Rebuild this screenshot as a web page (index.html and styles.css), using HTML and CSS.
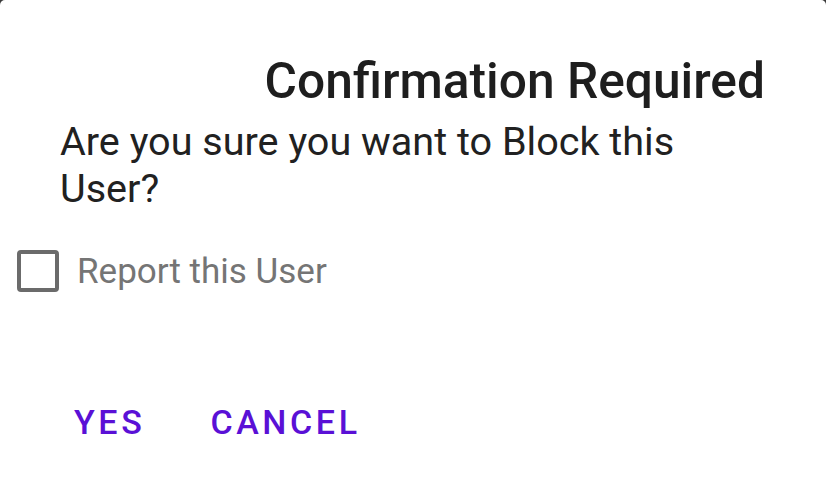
FILE: index.html
```html
<!DOCTYPE html>
<html>
<head>
<meta charset="utf-8">
<link rel="stylesheet" href="styles.css">
</head>
<body>
<div class="dialog">
  <h1 class="title">Confirmation Required</h1>
  <p class="message">Are you sure you want to Block this User?</p>
  <label class="check">
    <span class="box"></span>
    <span class="check-label">Report this User</span>
  </label>
  <div class="actions">
    <span class="btn">YES</span>
    <span class="btn">CANCEL</span>
  </div>
</div>
</body>
</html>
```
FILE: styles.css
```css
html, body {
  margin: 0;
  padding: 0;
  background: #3a3a3a;
}
.dialog {
  width: 826px;
  height: 484px;
  background: #ffffff;
  border-radius: 5px 5px 0 0;
  font-family: Roboto, "Liberation Sans", sans-serif;
  box-sizing: border-box;
  padding-top: 51px;
  overflow: hidden;
}
.title {
  margin: 0;
  font-size: 49.7px;
  font-weight: 500;
  line-height: 60px;
  color: #1e1e1e;
  text-align: right;
  padding-right: 61px;
}
.message {
  margin: 7px 0 0 60px;
  width: 700px;
  font-size: 39.6px;
  line-height: 47px;
  color: #212121;
}
.check {
  display: flex;
  align-items: center;
  margin-top: 38px;
  padding-left: 17px;
  gap: 18px;
}
.box {
  width: 34px;
  height: 34px;
  border: 4.5px solid #6b6b6b;
  border-radius: 4px;
  flex: none;
}
.check-label {
  font-size: 35px;
  color: #757575;
}
.actions {
  display: flex;
  gap: 65px;
  padding-left: 74px;
  margin-top: 110px;
}
.btn {
  font-size: 34px;
  line-height: 40px;
  font-weight: 500;
  letter-spacing: 3.6px;
  color: #5a10d6;
}
```
